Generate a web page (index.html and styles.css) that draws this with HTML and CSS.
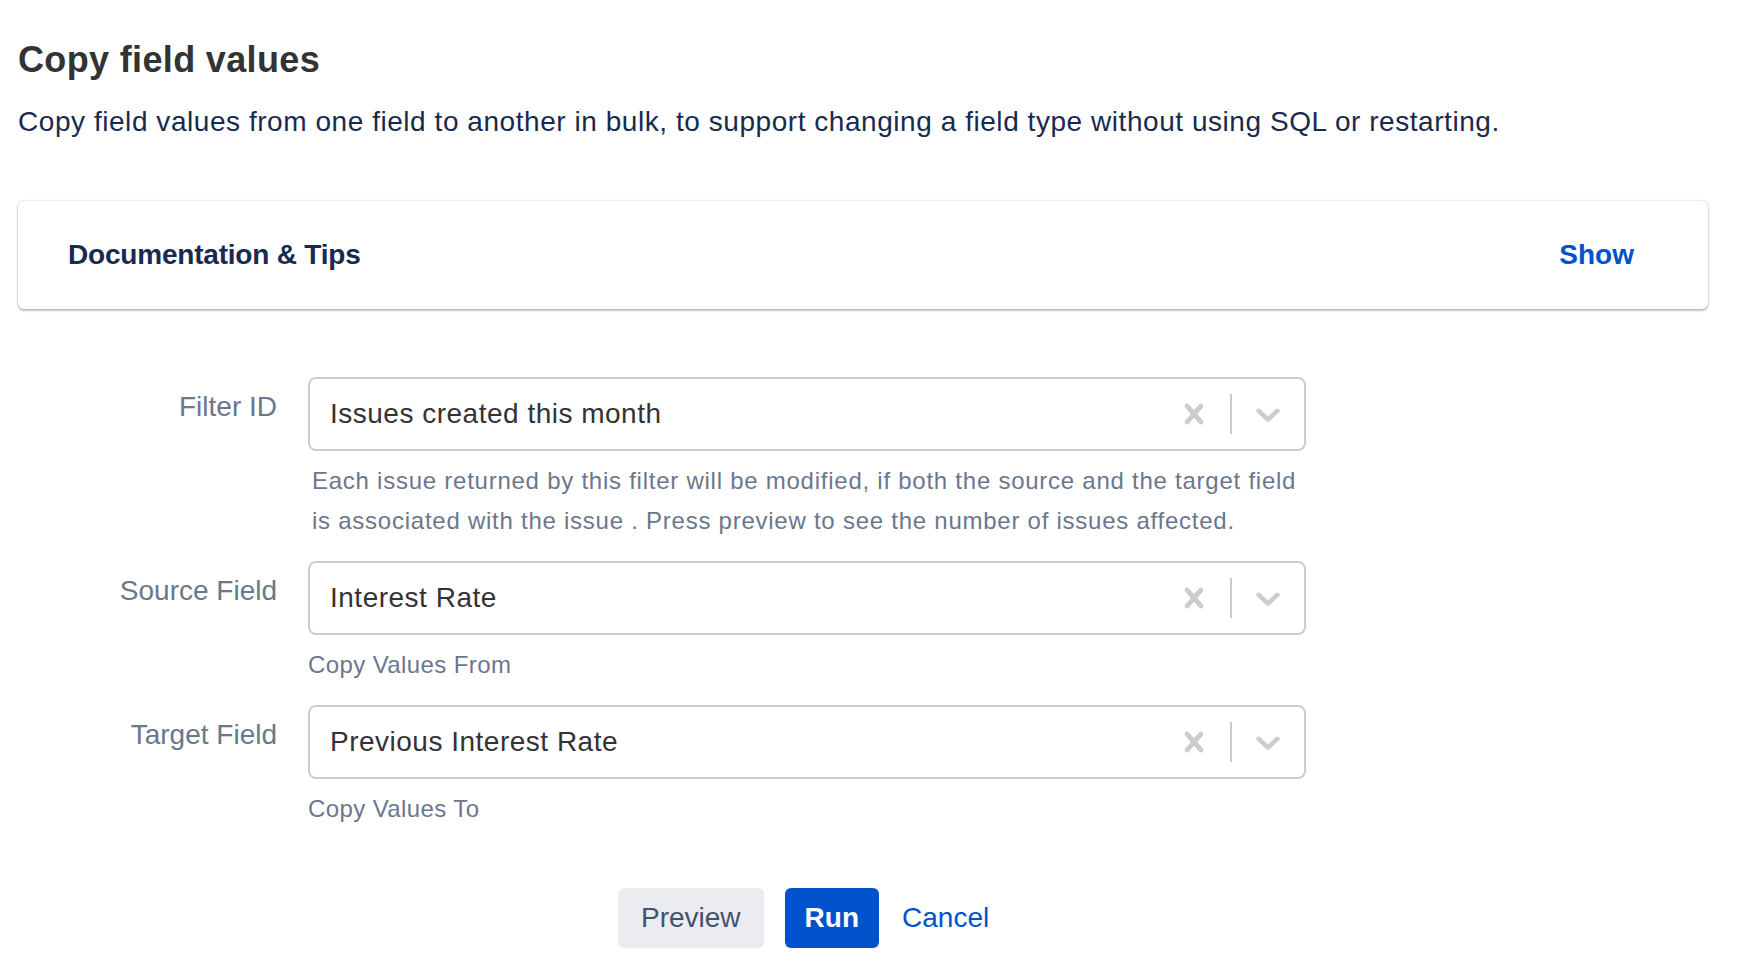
FILE: index.html
```html
<!DOCTYPE html>
<html lang="en">
<head>
<meta charset="utf-8">
<title>Copy field values</title>
<link rel="stylesheet" href="styles.css">
</head>
<body>
<div class="page">
  <h1 class="title">Copy field values</h1>
  <p class="desc">Copy field values from one field to another in bulk, to support changing a field type without using SQL or restarting.</p>

  <div class="card">
    <span class="card-title">Documentation &amp; Tips</span>
    <a class="link-btn show">Show</a>
  </div>

  <form class="form">
    <div class="row">
      <label class="label">Filter ID</label>
      <div class="field">
        <div class="select">
          <div class="value">Issues created this month</div>
          <div class="indicators">
            <span class="indicator"><svg viewBox="0 0 20 20" width="40" height="40"><path d="M14.348 14.849c-0.469 0.469-1.229 0.469-1.697 0l-2.651-3.030-2.651 3.029c-0.469 0.469-1.229 0.469-1.697 0-0.469-0.469-0.469-1.229 0-1.697l2.758-3.15-2.759-3.152c-0.469-0.469-0.469-1.228 0-1.697s1.228-0.469 1.697 0l2.652 3.031 2.651-3.031c0.469-0.469 1.228-0.469 1.697 0s0.469 1.229 0 1.697l-2.758 3.152 2.758 3.150c0.469 0.469 0.469 1.229 0 1.698z"/></svg></span>
            <span class="sep"></span>
            <span class="indicator"><svg viewBox="0 0 20 20" width="40" height="40"><path d="M4.516 7.548c0.436-0.446 1.043-0.481 1.576 0l3.908 3.747 3.908-3.747c0.533-0.481 1.141-0.446 1.574 0 0.436 0.445 0.408 1.197 0 1.615-0.406 0.418-4.695 4.502-4.695 4.502-0.217 0.223-0.502 0.335-0.787 0.335s-0.57-0.112-0.789-0.335c0 0-4.287-4.084-4.695-4.502s-0.436-1.170 0-1.615z"/></svg></span>
          </div>
        </div>
        <div class="help help-long">Each issue returned by this filter will be modified, if both the source and the target field<br>is associated with the issue . Press preview to see the number of issues affected.</div>
      </div>
    </div>

    <div class="row">
      <label class="label">Source Field</label>
      <div class="field">
        <div class="select">
          <div class="value">Interest Rate</div>
          <div class="indicators">
            <span class="indicator"><svg viewBox="0 0 20 20" width="40" height="40"><path d="M14.348 14.849c-0.469 0.469-1.229 0.469-1.697 0l-2.651-3.030-2.651 3.029c-0.469 0.469-1.229 0.469-1.697 0-0.469-0.469-0.469-1.229 0-1.697l2.758-3.15-2.759-3.152c-0.469-0.469-0.469-1.228 0-1.697s1.228-0.469 1.697 0l2.652 3.031 2.651-3.031c0.469-0.469 1.228-0.469 1.697 0s0.469 1.229 0 1.697l-2.758 3.152 2.758 3.150c0.469 0.469 0.469 1.229 0 1.698z"/></svg></span>
            <span class="sep"></span>
            <span class="indicator"><svg viewBox="0 0 20 20" width="40" height="40"><path d="M4.516 7.548c0.436-0.446 1.043-0.481 1.576 0l3.908 3.747 3.908-3.747c0.533-0.481 1.141-0.446 1.574 0 0.436 0.445 0.408 1.197 0 1.615-0.406 0.418-4.695 4.502-4.695 4.502-0.217 0.223-0.502 0.335-0.787 0.335s-0.57-0.112-0.789-0.335c0 0-4.287-4.084-4.695-4.502s-0.436-1.170 0-1.615z"/></svg></span>
          </div>
        </div>
        <div class="help">Copy Values From</div>
      </div>
    </div>

    <div class="row">
      <label class="label">Target Field</label>
      <div class="field">
        <div class="select">
          <div class="value">Previous Interest Rate</div>
          <div class="indicators">
            <span class="indicator"><svg viewBox="0 0 20 20" width="40" height="40"><path d="M14.348 14.849c-0.469 0.469-1.229 0.469-1.697 0l-2.651-3.030-2.651 3.029c-0.469 0.469-1.229 0.469-1.697 0-0.469-0.469-0.469-1.229 0-1.697l2.758-3.15-2.759-3.152c-0.469-0.469-0.469-1.228 0-1.697s1.228-0.469 1.697 0l2.652 3.031 2.651-3.031c0.469-0.469 1.228-0.469 1.697 0s0.469 1.229 0 1.697l-2.758 3.152 2.758 3.150c0.469 0.469 0.469 1.229 0 1.698z"/></svg></span>
            <span class="sep"></span>
            <span class="indicator"><svg viewBox="0 0 20 20" width="40" height="40"><path d="M4.516 7.548c0.436-0.446 1.043-0.481 1.576 0l3.908 3.747 3.908-3.747c0.533-0.481 1.141-0.446 1.574 0 0.436 0.445 0.408 1.197 0 1.615-0.406 0.418-4.695 4.502-4.695 4.502-0.217 0.223-0.502 0.335-0.787 0.335s-0.57-0.112-0.789-0.335c0 0-4.287-4.084-4.695-4.502s-0.436-1.170 0-1.615z"/></svg></span>
          </div>
        </div>
        <div class="help">Copy Values To</div>
      </div>
    </div>

    <div class="actions">
      <button type="button" class="btn btn-default">Preview</button>
      <button type="button" class="btn btn-primary">Run</button>
      <button type="button" class="btn btn-link">Cancel</button>
    </div>
  </form>
</div>
</body>
</html>
```
FILE: styles.css
```css
html, body {
  margin: 0;
  padding: 0;
  background: #ffffff;
}

body {
  font-family: "Liberation Sans", Arial, sans-serif;
  color: #172b4d;
}

.page {
  padding: 38px 38px 0 18px;
}

.title {
  margin: 0;
  font-size: 36px;
  line-height: 44px;
  font-weight: 700;
  color: #333333;
  letter-spacing: 0.35px;
}

.desc {
  margin: 20px 0 0 0;
  font-size: 28px;
  line-height: 40px;
  color: #172b4d;
  letter-spacing: 0.55px;
}

.card {
  margin-top: 59px;
  height: 108px;
  box-sizing: border-box;
  display: flex;
  align-items: center;
  justify-content: space-between;
  padding: 0 50px 0 50px;
  border-radius: 6px;
  background: #ffffff;
  box-shadow: 0 2px 2px rgba(9, 30, 66, 0.25), 0 0 2px rgba(9, 30, 66, 0.31);
}

.card-title {
  font-size: 28px;
  font-weight: 700;
  color: #172b4d;
  letter-spacing: -0.2px;
}

.link-btn {
  font-size: 28px;
  font-weight: 700;
  color: #0052cc;
  padding: 0 24px;
  cursor: pointer;
}

.form {
  margin-top: 68px;
}

.row {
  display: grid;
  grid-template-columns: 259px 998px;
  column-gap: 31px;
  margin-bottom: 20px;
}

.label {
  text-align: right;
  font-size: 28px;
  line-height: 40px;
  padding-top: 10px;
  color: #6b778c;
}

.select {
  height: 74px;
  box-sizing: border-box;
  border: 2px solid #cccccc;
  border-radius: 8px;
  display: flex;
  align-items: center;
  background: #ffffff;
}

.value {
  flex: 1;
  padding: 0 20px;
  font-size: 28px;
  color: #333333;
  letter-spacing: 0.5px;
}

.indicators {
  display: flex;
  align-items: center;
  align-self: stretch;
}

.indicator {
  display: flex;
  padding: 0 16px;
  fill: #cccccc;
}

.sep {
  width: 2px;
  height: 40px;
  background: #cccccc;
}

.help {
  margin-top: 10px;
  font-size: 24px;
  line-height: 40px;
  color: #6b778c;
  letter-spacing: 0.4px;
}

.help-long {
  padding-left: 4px;
  letter-spacing: 0.75px;
}

.actions {
  display: flex;
  align-items: center;
  padding-left: 600px;
  padding-top: 39px;
}

.btn {
  height: 60px;
  border: none;
  border-radius: 6px;
  font-family: "Liberation Sans", Arial, sans-serif;
  font-size: 28px;
  padding: 0 23px;
  cursor: pointer;
}

.btn-default {
  background: #ebecf0;
  color: #42526e;
  margin-right: 21px;
}

.btn-primary {
  background: #0052cc;
  color: #ffffff;
  font-weight: 700;
  padding: 0 20px;
}

.btn-link {
  background: transparent;
  color: #0052cc;
}
```
